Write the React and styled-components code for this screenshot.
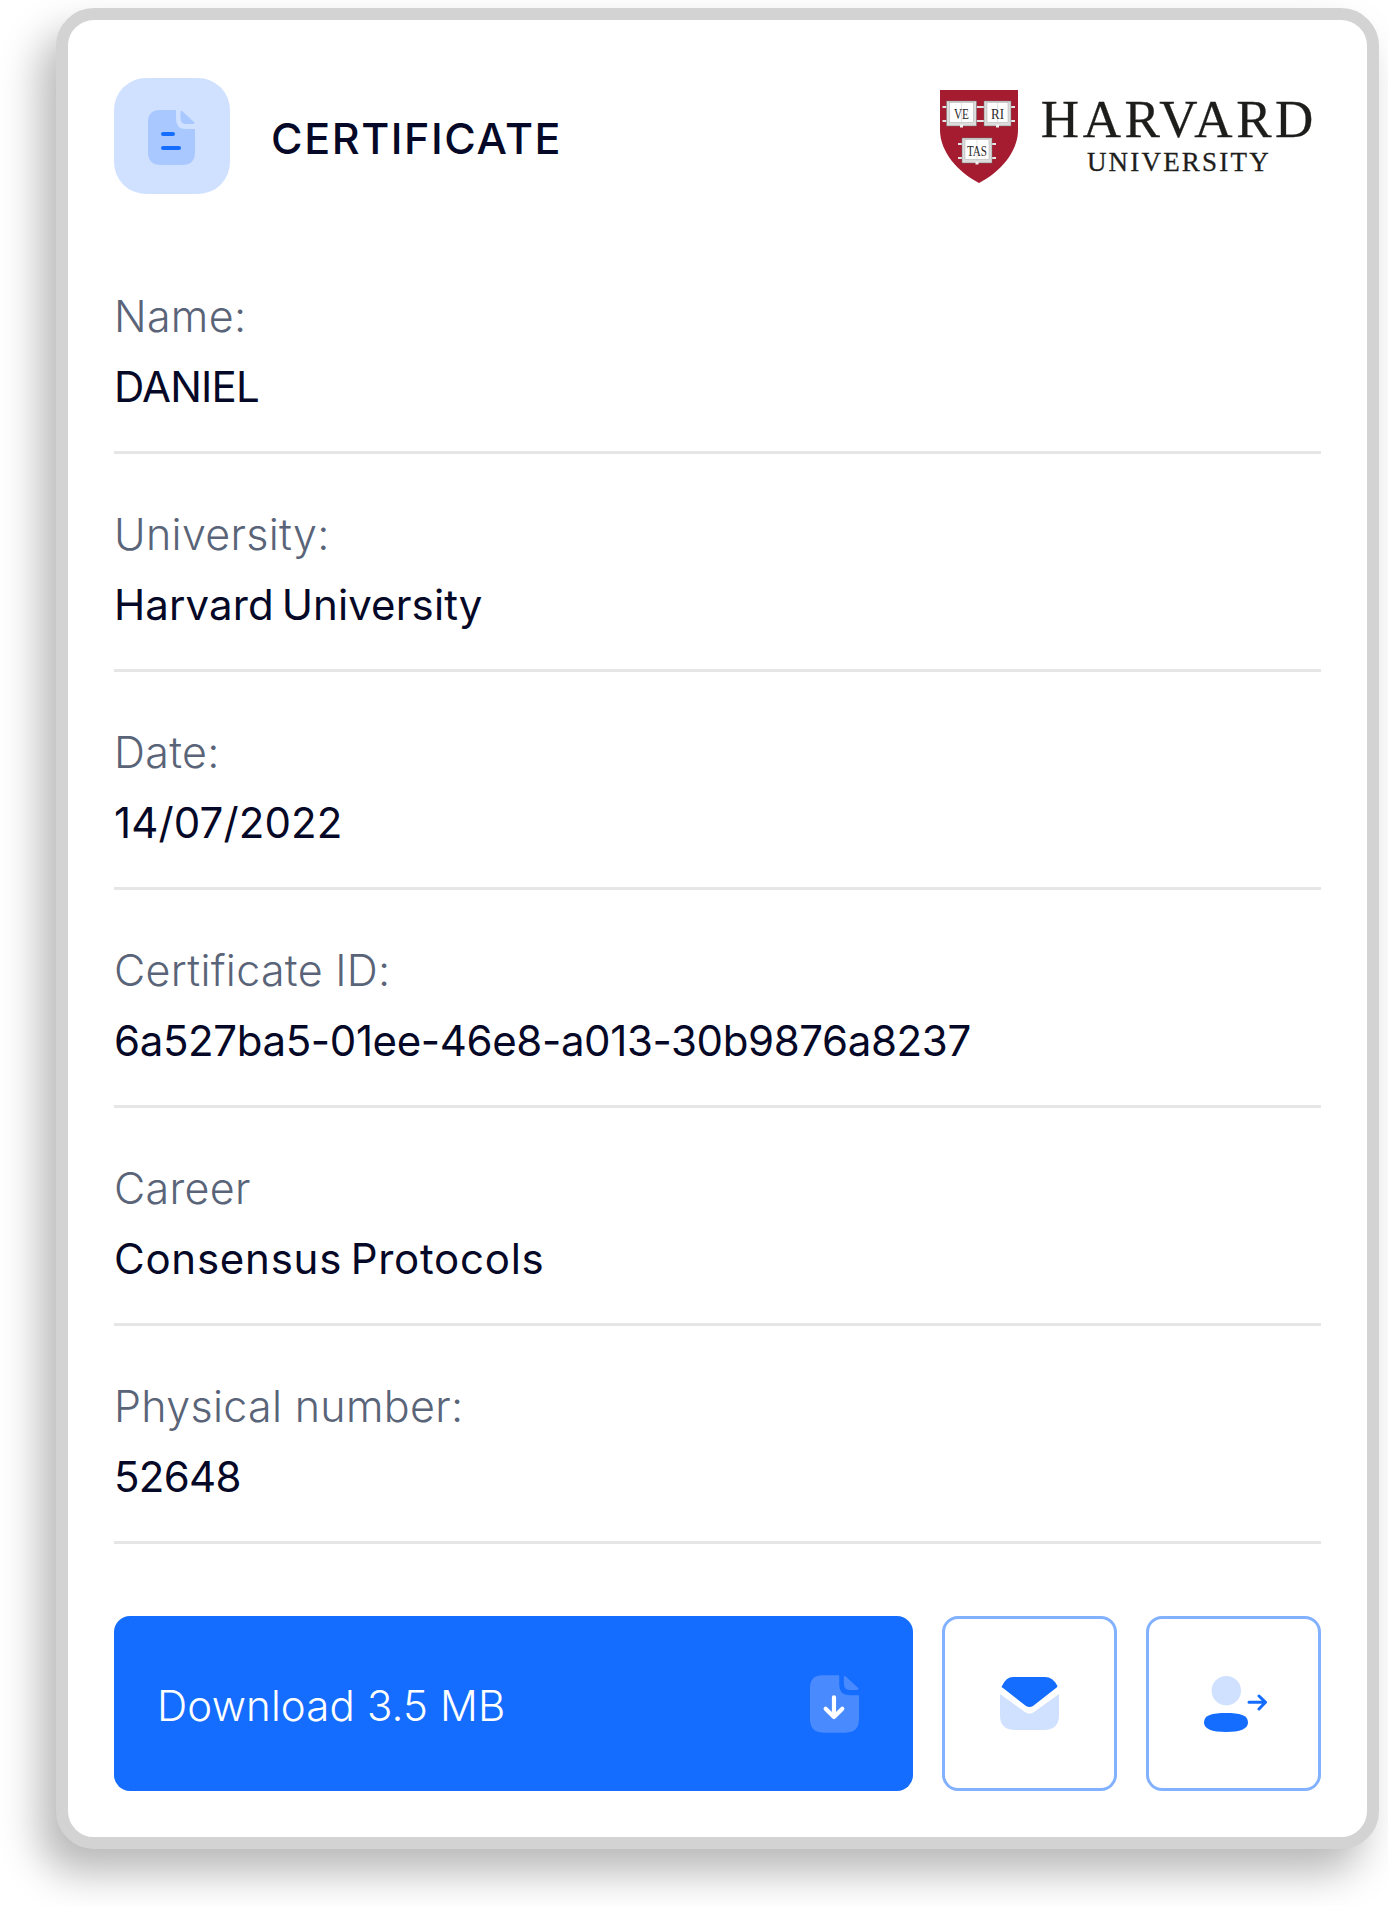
import React from 'react';
import styled, { createGlobalStyle } from 'styled-components';

const GlobalStyle = createGlobalStyle`
    html, body {
        margin: 0;
        padding: 0;
        background: #fff;
    }
    body {
        font-family: Inter, "Noto Sans", sans-serif;
    }
`;

const Page = styled.div`
    width: 1388px;
    height: 1906px;
    padding: 8px 0 0 56px;
    box-sizing: border-box;
    overflow: hidden;
`;

const Card = styled.div`
    width: 1323px;
    height: 1841px;
    box-sizing: border-box;
    border: 12px solid #d3d3d3;
    border-radius: 38px;
    background: #fff;
    padding: 58px 46px 46px 46px;
    box-shadow: -16px 24px 40px rgba(0, 0, 0, 0.28);
`;

const Header = styled.div`
    display: flex;
    justify-content: space-between;
    align-items: center;
    height: 116px;
    margin-bottom: 42px;
`;

const TitleGroup = styled.div`
    display: flex;
    align-items: center;
    gap: 41px;
`;

const IconTile = styled.div`
    width: 116px;
    height: 116px;
    box-sizing: border-box;
    padding: 3px 2px 0 0;
    border-radius: 32px;
    background: #d0e1ff;
    display: flex;
    align-items: center;
    justify-content: center;
`;

const Title = styled.h1`
    margin: 0;
    padding-top: 4px;
    font-size: 43px;
    font-weight: 500;
    letter-spacing: 1.6px;
    color: #050826;
`;

const Logo = styled.div`
    display: flex;
    align-items: center;
    gap: 23px;
    padding-right: 4px;
`;

const LogoWords = styled.div`
    display: flex;
    flex-direction: column;
    align-items: center;
    padding-top: 4px;
    font-family: "Liberation Serif", serif;
    color: #1d1d1b;
    -webkit-text-stroke: 0.3px #1d1d1b;
`;

const LogoMain = styled.span`
    font-size: 53px;
    line-height: 50px;
    letter-spacing: 3.6px;
    margin-top: -4px;
`;

const LogoSub = styled.span`
    font-size: 27px;
    line-height: 32px;
    letter-spacing: 2.2px;
    margin-top: 1.5px;
`;

const Row = styled.div`
    height: 218px;
    box-sizing: border-box;
    border-bottom: 3px solid #e6e6e6;
    padding-top: 45px;
`;

const Label = styled.div`
    font-size: 43px;
    line-height: 70px;
    font-weight: 300;
    letter-spacing: 0.3px;
    color: #5a6478;
`;

const Value = styled.div`
    margin-top: 1px;
    font-size: 42px;
    line-height: 70px;
    font-weight: 400;
    letter-spacing: ${(props) => props.$tracking}px;
    word-spacing: -4px;
    color: #050826;
`;

const Actions = styled.div`
    display: flex;
    gap: 29px;
    margin-top: 72px;
`;

const DownloadButton = styled.button`
    flex: 1;
    height: 175px;
    border: none;
    border-radius: 16px;
    background: #146dff;
    color: #fff;
    font-family: inherit;
    font-size: 42px;
    font-weight: 300;
    letter-spacing: 0.15px;
    display: flex;
    align-items: center;
    justify-content: space-between;
    padding: 0 54px 0 43px;
`;

const DownloadLabel = styled.span`
    padding-top: 3px;
`;

const IconButton = styled.button`
    width: 175px;
    height: 175px;
    box-sizing: border-box;
    border: 3px solid #82b1ff;
    border-radius: 16px;
    background: #fff;
    padding: 0;
    display: flex;
    align-items: center;
    justify-content: center;
`;

const FILE_BODY = 'M12 0H28V9Q28 19 38 19H47V42Q47 55 34 55H13Q0 55 0 42V12Q0 0 12 0Z';
const FILE_FOLD = 'M32.5 2Q32.5 0 34 1L46 12Q47.5 14 45 14H38Q32.5 14 32.5 8Z';

const FileIcon = () => (
    <svg width="47" height="55" viewBox="0 0 47 55">
        <path d={FILE_BODY} fill="#a9c8ff" />
        <path d={FILE_FOLD} fill="#a9c8ff" />
        <rect x="13" y="22" width="14" height="4" rx="2" fill="#146dff" />
        <rect x="13" y="36" width="20" height="4" rx="2" fill="#146dff" />
    </svg>
);

const DownloadIcon = () => (
    <svg width="49" height="58" viewBox="0 0 47 55">
        <path d={FILE_BODY} fill="#4a8aff" />
        <path d={FILE_FOLD} fill="#4a8aff" />
        <path d="M23 21V40M15 32L23 40L31 32" fill="none" stroke="#fff" strokeWidth="4" strokeLinecap="round" strokeLinejoin="round" />
    </svg>
);

const MailIcon = () => (
    <svg width="59" height="53" viewBox="0 0 59 53">
        <path d="M0 17L25 35Q29.5 38 34 35L59 17V38Q59 53 44 53H15Q0 53 0 38Z" fill="#d0e1ff" />
        <path d="M13 0H45Q53 0 57.5 9Q57.5 10 56 11L33 29Q29.5 31 26 29L3 11Q1 10 2 9Q6 0 13 0Z" fill="#146dff" />
    </svg>
);

const TransferIcon = () => (
    <svg width="66" height="56" viewBox="-3 0 66 56">
        <circle cx="22.3" cy="14.7" r="14.7" fill="#d0e1ff" />
        <path d="M22 37C36 37 44 39 44 46.5C44 53 36 56 22 56C8 56 0 53 0 46.5C0 39 8 37 22 37Z" fill="#146dff" />
        <path d="M45 26.3H61M55 20L61.5 26.3L55 33" fill="none" stroke="#146dff" strokeWidth="3" strokeLinecap="round" strokeLinejoin="round" />
    </svg>
);

const Book = ({ x, y, w, h, text, textWidth }) => (
    <g>
        <rect x={x - 4} y={y + 5} width="4" height="2" fill="#e4e4e4" />
        <rect x={x - 4} y={y + h - 6} width="4" height="2" fill="#e4e4e4" />
        <rect x={x + w} y={y + 5} width="4" height="2" fill="#e4e4e4" />
        <rect x={x + w} y={y + h - 6} width="4" height="2" fill="#e4e4e4" />
        <rect x={x} y={y} width={w} height={h} fill="#dcdcdc" stroke="#6f6f6f" strokeWidth="0.5" />
        <rect x={x + 3} y={y + 1.5} width={w - 6} height={h - 5} fill="#fff" stroke="#999" strokeWidth="0.4" />
        <line x1={x + w / 2} y1={y + 1.5} x2={x + w / 2} y2={y + h - 2} stroke="#c4c4c4" strokeWidth="0.5" />
        <rect x={x + w / 2 - 1.5} y={y + h - 1.5} width="3" height="3" fill="#f0f0f0" />
        <text
            x={x + w / 2}
            y={y + 17.5}
            textAnchor="middle"
            fontFamily="Liberation Serif, serif"
            fontSize="15"
            textLength={textWidth}
            lengthAdjust="spacingAndGlyphs"
            fill="#2a2a2a"
        >
            {text}
        </text>
    </g>
);

const Shield = () => (
    <svg width="78" height="93" viewBox="0 0 78 93">
        <path d="M0 0H78V40C78 62 60 82 39 93C18 82 0 62 0 40Z" fill="#a51c30" />
        <Book x={6.5} y={11} w={30} h={25} text="VE" textWidth={15} />
        <Book x={44} y={11} w={27} h={25} text="RI" textWidth={13} />
        <Book x={22} y={48} w={30} h={25} text="TAS" textWidth={20} />
    </svg>
);

const fields = [
    { label: 'Name:', value: 'DANIEL', tracking: -0.8 },
    { label: 'University:', value: 'Harvard University', tracking: 0.1 },
    { label: 'Date:', value: '14/07/2022', tracking: 0.12 },
    { label: 'Certificate ID:', value: '6a527ba5-01ee-46e8-a013-30b9876a8237', tracking: -0.37 },
    { label: 'Career', value: 'Consensus Protocols', tracking: 0.75 },
    { label: 'Physical number:', value: '52648', tracking: -0.7 },
];

export default function App() {
    return (
        <Page>
            <GlobalStyle />
            <Card>
                <Header>
                    <TitleGroup>
                        <IconTile>
                            <FileIcon />
                        </IconTile>
                        <Title>CERTIFICATE</Title>
                    </TitleGroup>
                    <Logo>
                        <Shield />
                        <LogoWords>
                            <LogoMain>HARVARD</LogoMain>
                            <LogoSub>UNIVERSITY</LogoSub>
                        </LogoWords>
                    </Logo>
                </Header>
                {fields.map((field) => (
                    <Row key={field.label}>
                        <Label>{field.label}</Label>
                        <Value $tracking={field.tracking}>{field.value}</Value>
                    </Row>
                ))}
                <Actions>
                    <DownloadButton>
                        <DownloadLabel>Download 3.5 MB</DownloadLabel>
                        <DownloadIcon />
                    </DownloadButton>
                    <IconButton>
                        <MailIcon />
                    </IconButton>
                    <IconButton>
                        <TransferIcon />
                    </IconButton>
                </Actions>
            </Card>
        </Page>
    );
}
